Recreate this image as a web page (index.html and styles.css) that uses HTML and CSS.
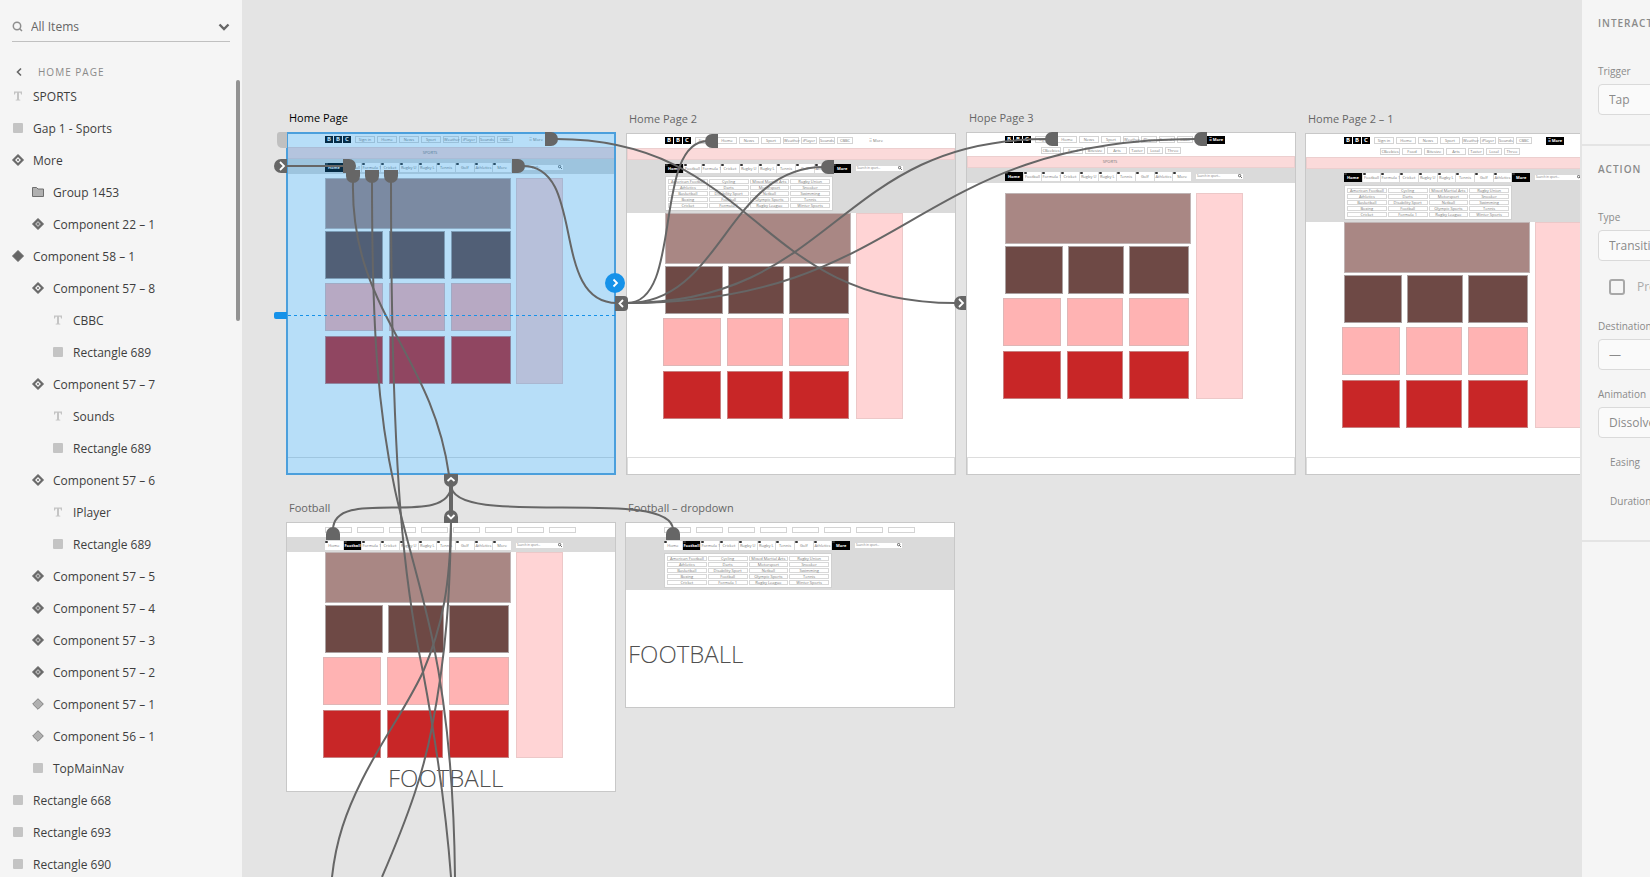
FILE: index.html
```
<!DOCTYPE html>
<html lang="en">
<head>
<meta charset="utf-8">
<title>Prototype</title>
<link rel="stylesheet" href="styles.css">
</head>
<body>
<svg class="defs" aria-hidden="true">
  <symbol id="i-text" viewBox="0 0 12 12"><path d="M2 1.500h8v3H9L8.500 2.800H7v6.700l1.300.3v.7H3.700v-.7L5 9.500V2.800H3.500L3 4.500H2z" fill="#c4c4c4"/></symbol>
  <symbol id="i-rect" viewBox="0 0 12 12"><rect x="1" y="1" width="10" height="10" rx="1" fill="#c4c4c4"/></symbol>
  <symbol id="i-folder" viewBox="0 0 12 12"><path d="M.5 1.500h4l1.500 1.500h5.500v7.500H.5z" fill="#b0b0b0" stroke="#6e6e6e"/></symbol>
  <symbol id="i-main" viewBox="0 0 12 12"><path d="M6 .5 11.500 6 6 11.500.5 6z" fill="#666" stroke="#666" stroke-linejoin="round"/></symbol>
  <symbol id="i-light" viewBox="0 0 12 12"><path d="M6 .7 11.300 6 6 11.300.7 6z" fill="#b0b0b0" stroke="#808080" stroke-linejoin="round"/></symbol>
  <symbol id="i-state" viewBox="0 0 12 12"><path d="M6 .5 11.500 6 6 11.500.5 6z" fill="#666" stroke="#666" stroke-linejoin="round"/><path d="M6 3 9 6 6 9 3 6z" fill="#f0f0f0"/><circle cx="6" cy="6" r="1" fill="#666"/></symbol>
  <symbol id="i-state-dim" viewBox="0 0 12 12"><path d="M6 .5 11.500 6 6 11.500.5 6z" fill="#666" stroke="#666" stroke-linejoin="round"/><path d="M6 3 9 6 6 9 3 6z" fill="#b4b4b4"/><circle cx="6" cy="6" r="1" fill="#666"/></symbol>
</svg>

<div class="app">
  <aside class="layers">
    <div class="search">
      <svg width="12" height="12" viewBox="0 0 12 12" fill="none" stroke="#8e8e8e" stroke-width="1.500"><circle cx="5" cy="5" r="3.700"/><path d="M7.700 7.700 10 10"/></svg>
      <input type="text" value="All Items" aria-label="Filter layers">
      <button type="button" aria-label="Filter options"><svg width="12" height="8" viewBox="0 0 12 8" fill="none" stroke="#666" stroke-width="2.400"><path d="M1.500 1.500 6 6l4.500-4.500"/></svg></button>
    </div>
    <div class="crumb">
      <button type="button" aria-label="Back"><svg width="6" height="10" viewBox="0 0 6 10" fill="none" stroke="#666" stroke-width="1.600"><path d="M5 1.500 1.500 5 5 8.500"/></svg></button>
      <span>HOME PAGE</span>
    </div>
    <ul class="tree" id="tree"></ul>
    <div class="thumb"></div>
  </aside>

  <main class="canvas">
    <div id="boards"></div>
    <svg class="wires" width="1338" height="877" viewBox="242 0 1338 877" aria-hidden="true">
      <g class="wire">
        <path d="M287 166H345"/>
        <path d="M556 139C755 139 755 303 955 303"/>
        <path d="M523 166C587 166 549 303 617 303"/>
        <path d="M708 141C652 141 684 303 627 303"/>
        <path d="M824 167C727 167 722 303 627 303"/>
        <path d="M1047 139C836 139 836 303 627 303"/>
        <path d="M1196 139C910 139 910 303 627 303"/>
        <path d="M353 181C350 310 432 352 449 475"/>
        <path d="M372 181C372 330 378 412 395 490C405 536 421 585 433 642C445 700 454 780 455 877"/>
        <path d="M391 181C391 300 393 400 399 490C403 550 412 620 423 672C436 742 446 810 451 877"/>
        <path d="M451 522C450 585 443 625 423 672C404 712 384 736 362 780C346 812 336 840 332 877"/>
        <path d="M451 522C450 590 447 650 432 727C424 770 410 812 382 877"/>
        <path d="M451 485C451 530 333 485 333 530"/>
        <path d="M451 485C451 530 673 485 673 530"/>
        <path d="M451 484V514" stroke-width="4"/>
      </g>
      <path d="M287 132h-7q-3 0-3 3v7q0 6 6 6h4z" fill="#c0c0c0"/>
      <g fill="#666">
        <path d="M545 132h6a7 7 0 0 1 0 14h-6z"/>
        <path d="M512 159h6a7 7 0 0 1 0 14h-6z"/>
        <path d="M343 159h6a7 7 0 0 1 0 14h-6z"/>
        <path d="M287 159h-6a7 7 0 0 0 0 14h6z"/>
        <path d="M346 170h14v6a7 7 0 0 1-14 0z"/>
        <path d="M365 170h14v6a7 7 0 0 1-14 0z"/>
        <path d="M384 170h14v6a7 7 0 0 1-14 0z"/>
        <path d="M615 296h9q4 0 4 4v7q0 4-4 4h-9z"/>
        <path d="M444 474h14v6a7 7 0 0 1-14 0z"/>
        <path d="M444 523h14v-6a7 7 0 0 0-14 0z"/>
        <path d="M326 540h14v-6a7 7 0 0 0-14 0z"/>
        <path d="M666 540h14v-6a7 7 0 0 0-14 0z"/>
        <path d="M718 134h-6a7 7 0 0 0 0 14h6z"/>
        <path d="M834 160h-6a7 7 0 0 0 0 14h6z"/>
        <path d="M1058 132h-6a7 7 0 0 0 0 14h6z"/>
        <path d="M1207 132h-6a7 7 0 0 0 0 14h6z"/>
        <path d="M966 296h-5a7 7 0 0 0 0 14h5z"/>
      </g>
      <path d="M288 315.500H615" stroke="#1692e9" stroke-dasharray="3 3"/>
      <path d="M287 312h-11q-2 0-2 2v3q0 2 2 2h11z" fill="#1692e9"/>
      <circle cx="615" cy="283" r="10" fill="#1692e9"/>
      <g fill="none" stroke="#fff" stroke-width="1.800">
        <path d="M613.500 279.500l3.500 3.500-3.500 3.500"/>
        <path d="M280 162l4 4-4 4"/>
        <path d="M623 300l-3.500 3.500 3.500 3.500"/>
        <path d="M959 299l4 4-4 4"/>
        <path d="M447.500 481l3.500-3 3.500 3"/>
        <path d="M447.500 515l3.500 3.500 3.500-3.500"/>
      </g>
    </svg>
  </main>

  <aside class="inspector">
    <section>
      <h2>INTERACTION</h2>
      <div class="field">
        <label for="trigger">Trigger</label>
        <select id="trigger"><option>Tap</option></select>
      </div>
    </section>
    <section>
      <h2>ACTION</h2>
      <div class="field">
        <label for="type">Type</label>
        <select id="type"><option>Transition</option></select>
      </div>
      <label class="check"><input type="checkbox"><span>Preserve Scroll Position</span></label>
      <div class="field">
        <label for="dest">Destination</label>
        <select id="dest"><option>—</option></select>
      </div>
      <div class="field">
        <label for="anim">Animation</label>
        <select id="anim"><option>Dissolve</option></select>
      </div>
      <p class="sub">Easing</p>
      <p class="sub">Duration</p>
    </section>
  </aside>
</div>
<script src="app.js"></script>
</body>
</html>
```
FILE: styles.css
```
* { box-sizing: border-box; }
body {
  margin: 0;
  background: #e4e4e4;
  color: #3e3e3e;
  font-family: "Open Sans", "Noto Sans", sans-serif;
  font-size: 12px;
}
.defs { position: absolute; width: 0; height: 0; }
.app {
  display: grid;
  grid-template-columns: 242px 1fr 68px;
  height: 100vh;
  overflow: hidden;
}
button { border: 0; padding: 0; background: none; display: flex; }
input, select { font: inherit; color: inherit; }

/* layers */
.layers { position: relative; background: #f5f5f5; overflow: hidden; }
.search {
  display: flex;
  align-items: center;
  gap: 7px;
  height: 42px;
  margin: 0 12px;
  padding-top: 12px;
  border-bottom: 1px solid #c0c0c0;
}
.search input {
  flex: 1;
  min-width: 0;
  border: 0;
  padding: 0;
  background: none;
  color: #666;
}
.crumb {
  display: flex;
  align-items: center;
  gap: 16px;
  height: 38px;
  padding: 22px 0 0 16px;
  color: #8a8a8a;
  font-size: 10px;
  letter-spacing: 1px;
}
.tree { list-style: none; margin: 0; padding: 0; }
.tree li {
  display: flex;
  align-items: center;
  gap: 9px;
  height: 32px;
  padding-left: 12px;
}
.tree svg { flex: none; width: 12px; height: 12px; }
.tree .l1 { padding-left: 32px; }
.tree .l2 { padding-left: 52px; }
.thumb {
  position: absolute;
  right: 2px;
  top: 80px;
  width: 4px;
  height: 241px;
  border-radius: 2px;
  background: #929292;
}

/* canvas */
.canvas { position: relative; overflow: hidden; margin-right: 2px; }
.wires { position: absolute; left: 0; top: 0; }
.wire { fill: none; stroke: #666; stroke-width: 2; }
.artboard { position: absolute; width: 330px; }
.artboard h3 {
  margin: 0 0 6px 3px;
  height: 17px;
  font-size: 11px;
  font-weight: 400;
  line-height: 17px;
  color: #666;
}
.board {
  position: relative;
  display: flex;
  flex-direction: column;
  border: 1px solid #c8c8c8;
  background: #fff;
  font-size: 4px;
  line-height: 6px;
  color: #777;
}
.board > * { flex: none; }
.artboard.selected h3 { color: #000; }
.selected .board::after {
  content: "";
  position: absolute;
  inset: -1px;
  border: 2px solid #4b9fdc;
  background: rgba(18, 145, 232, .3);
}
.top { display: flex; flex-direction: column; gap: 3px; padding: 3px 0 0 38px; height: 14px; }
.top.two { height: 23px; }
.links { display: flex; gap: 2px; height: 8px; white-space: nowrap; }
.links.second { margin-left: 36px; }
.bbc { display: flex; gap: 1px; margin-right: 2px; }
.bbc b {
  width: 8px;
  height: 7px;
  background: #000;
  color: #fff;
  font-size: 6px;
  line-height: 7px;
  text-align: center;
}
.link { width: 20px; height: 7px; border: 1px solid #d4d4d4; text-align: center; line-height: 5px; }
.link.s { width: 16px; }
.more { width: 18px; height: 8px; margin-left: 12px; line-height: 8px; text-align: center; }
.more.on { background: #000; color: #fff; font-weight: 700; }
.slots { display: flex; gap: 5px; padding-top: 1px; }
.slots i { width: 27px; height: 6px; border: 1px solid #d4d4d4; }
.band { height: 12px; border: 1px solid #eccfcf; background: #fbdada; text-align: center; line-height: 9px; padding-right: 42px; }
.sport { padding: 3px 0 2px 38px; background: #dadada; }
.bar { display: flex; align-items: center; gap: 5px; height: 10px; }
.tabs { display: grid; grid-template-columns: repeat(10, 1fr); gap: 1px; flex: none; width: 186px; }
.tab {
  position: relative;
  height: 9px;
  min-width: 0;
  background: #fff;
  text-align: center;
  line-height: 10px;
  white-space: nowrap;
}
.tab::before {
  content: "";
  position: absolute;
  left: 0;
  top: 0;
  width: 3px;
  height: 2px;
  border-radius: 1px;
  background: #333;
}
.tab.on { background: #000; color: #fff; font-weight: 700; }
.find { display: flex; justify-content: space-between; align-items: center; width: 47px; height: 5px; padding: 0 1px; background: #fff; font-size: 3px; }
.find svg { width: 4px; height: 4px; }
.drop {
  display: grid;
  grid-template-columns: repeat(4, 1fr);
  gap: 1px;
  width: 168px;
  margin: 3px 0 0;
  padding: 2px;
  border: 1px solid #d0d0d0;
  background: #fff;
}
.drop span { height: 5px; border: 1px solid #d8d8d8; line-height: 4px; text-align: center; white-space: nowrap; }
.content { display: flex; gap: 5px; padding-left: 38px; }
.blocks { width: 186px; }
.hero { height: 51px; margin-bottom: 2px; border: 1px solid #c0b4b4; background: #a98784; }
.row {
  display: grid;
  grid-template-columns: 58px 56px 60px;
  justify-content: space-between;
  width: 184px;
  height: 48px;
}
.row i { border: 1px solid #aaa0a0; }
.dark i { background: #6e4945; }
.row.pink { margin-top: 4px; margin-bottom: 5px; }
.pink i { background: #ffb3b3; border-color: #dfb6b6; }
.red i { background: #c82627; border-color: #c88080; }
.pink, .red { width: 186px; margin-left: -2px; }
.selected .row { width: 186px; margin-left: 0; }
.side { width: 47px; border: 1px solid #ecc8c8; background: #ffd4d5; }
.foot { height: 17px; margin-top: auto; border: 1px solid #ddd; border-bottom: 0; }
.headline { font-size: 24px; font-weight: 300; line-height: 26px; color: #505050; }

/* inspector */
.inspector {
  background: #f5f5f5;
  color: #8a8a8a;
  overflow: hidden;
  font-size: 10px;
  line-height: 16px;
}
.inspector section { width: 240px; border-bottom: 2px solid #e4e4e4; padding: 14px 0 0 16px; }
.inspector section:first-child { height: 146px; }
.inspector section:last-child { height: 396px; }
.inspector h2 { margin: 0 0 31px; font-size: 10px; font-weight: 600; letter-spacing: 1px; line-height: 18px; }
.field { display: flex; flex-direction: column; gap: 5px; margin-bottom: 16px; }
.field select {
  appearance: none;
  width: 204px;
  height: 31px;
  padding: 0 10px;
  border: 1px solid #dadada;
  border-radius: 4px;
  background: #fafafa;
  font-size: 12px;
}
.check { display: flex; align-items: center; gap: 12px; margin: 18px 0 23px 11px; white-space: nowrap; color: #aaa; font-size: 12px; }
.check input { appearance: none; flex: none; width: 16px; height: 16px; margin: 0; border: 2px solid #a8a8a8; border-radius: 3px; }
.sub { margin: 0 0 23px 12px; }
```
FILE: app.js
```
const layers = [
  [0, 'text', 'SPORTS'], [0, 'rect', 'Gap 1 - Sports'], [0, 'state', 'More'],
  [1, 'folder', 'Group 1453'], [1, 'state-dim', 'Component 22 – 1'],
  [0, 'main', 'Component 58 – 1'],
  [1, 'state', 'Component 57 – 8'], [2, 'text', 'CBBC'], [2, 'rect', 'Rectangle 689'],
  [1, 'state', 'Component 57 – 7'], [2, 'text', 'Sounds'], [2, 'rect', 'Rectangle 689'],
  [1, 'state', 'Component 57 – 6'], [2, 'text', 'IPlayer'], [2, 'rect', 'Rectangle 689'],
  [1, 'state-dim', 'Component 57 – 5'], [1, 'state-dim', 'Component 57 – 4'],
  [1, 'state-dim', 'Component 57 – 3'], [1, 'state-dim', 'Component 57 – 2'],
  [1, 'light', 'Component 57 – 1'], [1, 'light', 'Component 56 – 1'],
  [1, 'rect', 'TopMainNav'], [0, 'rect', 'Rectangle 668'],
  [0, 'rect', 'Rectangle 693'], [0, 'rect', 'Rectangle 690']
];
document.getElementById('tree').innerHTML = layers.map(([level, icon, name]) =>
  `<li class="l${level}"><svg><use href="#i-${icon}"/></svg><span>${name}</span></li>`).join('');

const links = names => names.map((n, i) => `<span class="link${i > 3 ? ' s' : ''}">${n}</span>`).join('');
const topNav = b => {
  if (b.slots) return `<div class="top"><div class="slots">${'<i></i>'.repeat(8)}</div></div>`;
  const first = links(['Sign in', 'Home', 'News', 'Sport', 'Weather', 'iPlayer', 'Sounds', 'CBBC']);
  const second = b.two
    ? `<div class="links second">${links(['CBeebies', 'Food', 'Bitesize', 'Arts', 'Taster', 'Local', 'Three'])}</div>` : '';
  return `<div class="top${b.two ? ' two' : ''}"><div class="links"><span class="bbc"><b>B</b><b>B</b><b>C</b></span>${first}` +
    `<span class="more${b.two ? ' on' : ''}">⠿ More</span></div>${second}</div>`;
};
const tabNames = ['Home', 'Football', 'Formula 1', 'Cricket', 'Rugby U', 'Rugby L', 'Tennis', 'Golf', 'Athletics', 'More'];
const sports = ['American Football', 'Cycling', 'Mixed Martial Arts', 'Rugby Union',
  'Athletics', 'Darts', 'Motorsport', 'Snooker', 'Basketball', 'Disability Sport', 'Netball', 'Swimming',
  'Boxing', 'Football', 'Olympic Sports', 'Tennis', 'Cricket', 'Formula 1', 'Rugby League', 'Winter Sports'];
const sportNav = b => `<div class="sport" style="height:${b.sport}px"><div class="bar"><div class="tabs">` +
  tabNames.map(n => `<span class="tab${b.on.includes(n) ? ' on' : ''}">${n}</span>`).join('') +
  `</div><div class="find"><span>Search in sport...</span><svg viewBox="0 0 4 4" fill="none" stroke="#333" stroke-width=".7"><circle cx="1.600" cy="1.600" r="1.200"/><path d="M2.500 2.500 4 4"/></svg></div></div>` +
  (b.drop ? `<div class="drop">${sports.map(s => `<span>${s}</span>`).join('')}</div>` : '') + '</div>';
const row = c => `<div class="row ${c}"><i></i><i></i><i></i></div>`;
const content = b => `<div class="content" style="margin-top:${b.gap || 0}px"><div class="blocks"><div class="hero"></div>` +
  row('dark') + row('pink') + row('red') + '</div><div class="side"></div></div>';

const boards = [
  { name: 'Home Page', x: 286, y: 132, h: 343, selected: true, band: 'SPORTS', sport: 15, gap: 4, on: ['Home'], foot: true },
  { name: 'Home Page 2', x: 626, y: 133, h: 342, band: ' ', sport: 53, drop: true, on: ['Home', 'More'], foot: true },
  { name: 'Hope Page 3', x: 966, y: 132, h: 343, two: true, band: 'SPORTS', sport: 15, gap: 10, on: ['Home'], foot: true },
  { name: 'Home Page 2 – 1', x: 1305, y: 133, h: 342, two: true, band: ' ', sport: 53, drop: true, on: ['Home', 'More'], foot: true },
  { name: 'Football', x: 286, y: 522, h: 270, slots: true, sport: 15, on: ['Football'], title: [101, 7] },
  { name: 'Football – dropdown', x: 625, y: 522, h: 186, slots: true, sport: 53, drop: true, noContent: true, on: ['Football', 'More'], title: [2, 51] }
];
document.getElementById('boards').innerHTML = boards.map(b =>
  `<section class="artboard${b.selected ? ' selected' : ''}" style="left:${b.x - 242}px;top:${b.y - 23}px"><h3>${b.name}</h3>` +
  `<div class="board" style="height:${b.h}px">${topNav(b)}${b.band ? `<div class="band">${b.band}</div>` : ''}${sportNav(b)}` +
  (b.noContent ? '' : content(b)) +
  (b.title ? `<div class="headline" style="padding:${b.title[1]}px 0 0 ${b.title[0]}px">FOOTBALL</div>` : '') +
  (b.foot ? '<div class="foot"></div>' : '') + '</div></section>').join('');
```
